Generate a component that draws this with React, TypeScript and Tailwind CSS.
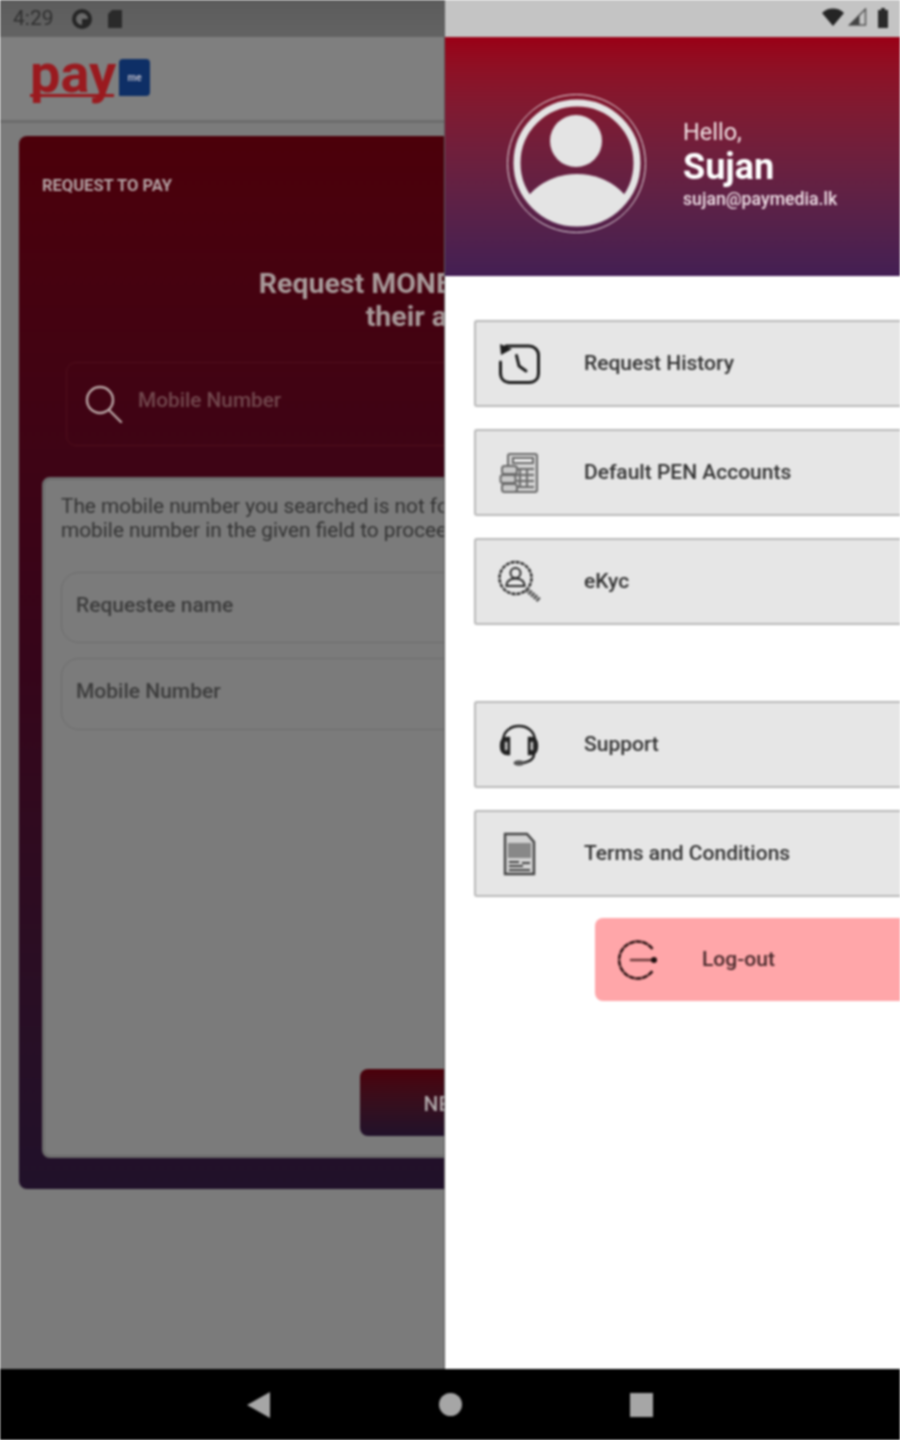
import React from "react";

const font = { fontFamily: "Roboto, 'Noto Sans', sans-serif" };

function HistoryIcon() {
  return (
    <svg width="44" height="44" viewBox="0 0 44 44" fill="none" stroke="#1c1c1c" strokeWidth="3" strokeLinecap="round" strokeLinejoin="round">
      <path d="M9 4H32c5 0 9.5 4 9.5 9V31c0 6-4 9.5-9.5 9.5H13c-6 0-9.5-4-9.5-9.5V20" />
      <path d="M3 2l1 11 11-6z" fill="#1c1c1c" stroke="none" />
      <path d="M19.5 13.5L22 24l7 5" />
    </svg>
  );
}

function AccountsIcon() {
  return (
    <svg width="44" height="44" viewBox="0 0 44 44" fill="none" stroke="#6a6a6a" strokeWidth="2">
      <rect x="11" y="3" width="29" height="38" rx="2" fill="#d2d2d2" />
      <rect x="16" y="7" width="20" height="5" fill="#f0f0f0" />
      <path d="M16 18h21M16 24h21M16 30h21M16 36h21M23 18v18M30 18v18" />
      <rect x="5" y="15" width="15" height="8" rx="2.5" fill="#c8c8c8" />
      <rect x="3.5" y="24" width="15" height="8" rx="2.5" fill="#c8c8c8" />
      <rect x="5" y="33" width="15" height="8" rx="2.5" fill="#c8c8c8" />
    </svg>
  );
}

function KycIcon() {
  return (
    <svg width="44" height="44" viewBox="0 0 44 44" fill="none" stroke="#2c2c2c" strokeWidth="2.4" strokeLinecap="round">
      <circle cx="18.5" cy="18" r="16" strokeDasharray="4 1" strokeLinecap="butt" />
      <circle cx="18.5" cy="13" r="5" strokeWidth="2" />
      <path d="M9.5 26c0-5 4-7.5 9-7.5s9 2.5 9 7.5z" strokeWidth="2" />
      <path d="M29.5 29.5l13 11" stroke="#555" strokeWidth="5" strokeDasharray="2.5 1" strokeLinecap="butt" />
    </svg>
  );
}

function SupportIcon() {
  return (
    <svg width="44" height="44" viewBox="0 0 44 44" fill="none" stroke="#1f1f1f" strokeWidth="2.4" strokeLinecap="round">
      <path d="M6 21V18C6 9 13 3 22 3s16 6 16 15v3" />
      <path d="M10 15h2v16h-2c-4 0-6-3-6-8s2-8 6-8z" fill="#2e2e2e" />
      <rect x="8" y="19" width="2.5" height="8" fill="#c8c8c8" stroke="none" />
      <path d="M34 15h-2v16h2c4 0 6-3 6-8s-2-8-6-8z" fill="#2e2e2e" />
      <rect x="33.5" y="19" width="2.5" height="8" fill="#c8c8c8" stroke="none" />
      <path d="M37 31c0 5-5 8-12 9" />
      <ellipse cx="22" cy="40" rx="5.5" ry="2.8" fill="#555" stroke="none" />
    </svg>
  );
}

function TermsIcon() {
  return (
    <svg width="44" height="44" viewBox="0 0 44 44" fill="none">
      <path d="M8 2h22l7 8v32H8z" fill="#d2d2d2" stroke="#444" strokeWidth="2.4" />
      <rect x="11" y="11" width="23" height="15" fill="#888" />
      <path d="M12 30h10M25 31h8M12 34h14M12 38h21" stroke="#444" strokeWidth="2.2" />
    </svg>
  );
}

function LogoutIcon() {
  return (
    <svg width="44" height="44" viewBox="0 0 44 44" fill="none" stroke="#2d1414" strokeLinecap="round">
      <path d="M35.5 11A18.5 18.5 0 1 0 35.5 33" strokeWidth="2.6" strokeDasharray="6 0.6" strokeLinecap="butt" />
      <path d="M14 22h22" strokeWidth="2.6" stroke="#6e3c3c" />
      <circle cx="37" cy="22" r="3" fill="#1f0f0f" stroke="none" />
    </svg>
  );
}

function MenuRow({ icon, label }: { icon: React.ReactNode; label: string }) {
  return (
    <div className="flex h-[87px] w-[460px] items-center rounded-l-[3px] border-y-[2.5px] border-l-[2.5px] border-[#b9b9b9] bg-[#e6e6e6]">
      <div className="ml-[21px] flex w-[44px] justify-center">{icon}</div>
      <span className="ml-[43px] text-[21px] font-medium text-[#333333]">{label}</span>
    </div>
  );
}

export default function App() {
  return (
    <div className="flex h-[1440px] w-[900px] flex-col overflow-hidden bg-black blur-[0.8px]" style={font}>
      <div className="flex h-[1369px] w-full">
        {/* dimmed screen behind the drawer */}
        <div className="flex w-[445px] shrink-0 flex-col overflow-hidden border-r border-[#5c5c5c] bg-[#7b7b7b]">
          <div className="flex h-[37px] shrink-0 items-center bg-gradient-to-b from-[#5c5c5c] to-[#636363] pl-[13px] text-[#2f2f2f]">
            <span className="text-[21px]">4:29</span>
            <svg className="ml-[17px]" width="22" height="22" viewBox="0 0 22 22">
              <circle cx="11" cy="11" r="10" fill="#252525" />
              <path d="M11 5a6 6 0 1 0 0 12V11h6a6 6 0 0 0-6-6z" fill="#6a6a6a" />
            </svg>
            <svg className="ml-[14px]" width="16" height="20" viewBox="0 0 16 20">
              <path d="M5 1h10v18H1V5z" fill="#2a2a2a" />
            </svg>
          </div>
          <div className="flex h-[86px] w-full shrink-0 items-start border-b-[3px] border-[#6c6c6c] bg-[#7f7f7f] pl-[30px] pt-[18px]">
            <div className="relative h-[44px] w-[88px]">
              <span className="block text-[54px] leading-[38px] font-bold text-[#9a1a1f]">pay</span>
              <div className="absolute bottom-[2px] left-0 h-[3px] w-[84px] bg-[#9a1a1f]" />
            </div>
            <div className="ml-[1px] mt-[4px] flex h-[37px] w-[31px] items-center justify-center rounded-[4px] rounded-bl-none bg-[#0e2f66] text-[10px] font-bold text-[#b7b7c5]">me</div>
          </div>
          <div className="pl-[19px] pt-[13px]">
            <div className="flex h-[1053px] w-[862px] flex-col rounded-[8px] bg-gradient-to-b from-[#4c000a] via-[#36051a] to-[#21112a] px-[23px] pb-[31px]">
              <div className="mt-[41px] text-[16.5px] leading-[18px] font-bold text-[#b5a3a5]">REQUEST TO PAY</div>
              <div className="mt-[72px] text-center text-[28.5px] leading-[33px] font-bold text-[#a89a9a]">
                <div className="pr-[10px]">Request MONEY from people</div>
                <div>their account</div>
              </div>
              <div className="ml-[24px] mt-[29px] flex h-[84px] w-[770px] shrink-0 items-center rounded-[10px] border border-[#50101c]">
                <svg className="ml-[18px]" width="38" height="38" viewBox="0 0 38 38" fill="none" stroke="#b9a5a5" strokeWidth="2.4" strokeLinecap="round">
                  <circle cx="15" cy="15" r="13" />
                  <path d="M24 25l12 12" />
                </svg>
                <span className="mb-[6px] ml-[15px] text-[20.8px] font-medium text-[#72484e]">Mobile Number</span>
              </div>
              <div className="mt-[31px] flex min-h-0 flex-1 flex-col rounded-[8px] border-[3px] border-[#6d6d6d] bg-[#7b7b7b] px-[16px] pb-[19px]">
                <div className="mt-[14px] text-[20.8px] leading-[24px] text-[#333]">
                  <div>The mobile number you searched is not found. Please enter the</div>
                  <div>mobile number in the given field to proceed with the request</div>
                </div>
                <div className="mt-[30px] flex h-[71px] w-[770px] shrink-0 items-center rounded-[18px] border border-[#6c6c6c] pb-[4px] pl-[14px] text-[21px] font-medium text-[#3c3c3c]">Requestee name</div>
                <div className="mt-[15px] flex h-[72px] w-[770px] shrink-0 items-center rounded-[18px] border border-[#6c6c6c] pb-[4px] pl-[14px] text-[21px] font-medium text-[#3c3c3c]">Mobile Number</div>
                <div className="ml-[299px] mt-auto flex h-[67px] w-[180px] shrink-0 items-center justify-center rounded-[8px] bg-gradient-to-b from-[#4c000a] to-[#21112a] pt-[4px] text-[21px] font-medium text-[#b0a8aa]">NEXT</div>
              </div>
            </div>
          </div>
        </div>

        {/* drawer */}
        <div className="flex min-w-0 flex-1 flex-col overflow-hidden bg-white">
          <div className="flex h-[37px] shrink-0 items-start justify-end gap-[4px] bg-[#c4c4c4] pr-[11px] pt-[8px]">
            <svg width="22" height="18" viewBox="0 0 22 18"><path d="M0 5a16 16 0 0 1 22 0L11 18z" fill="#252525" /></svg>
            <svg width="19" height="18" viewBox="0 0 18 18"><path d="M17 1v16H1z" fill="none" stroke="#555" strokeWidth="1.5" /><path d="M11 7v10H1z" fill="#444" /></svg>
            <svg className="ml-[6px]" width="12" height="20" viewBox="0 0 12 20"><path d="M4 0h4v2h3v18H1V2h3z" fill="#2a2a2a" /></svg>
          </div>
          <div className="flex h-[239px] shrink-0 items-center border-b border-[#3a0f50] bg-gradient-to-b from-[#9a0016] to-[#441f53] pl-[62px] pt-[14px]">
            <div className="flex h-[139px] w-[139px] shrink-0 items-center justify-center rounded-full border-[1.5px] border-[#e8dfe2]">
              <svg width="130" height="130" viewBox="0 0 130 130">
                <defs>
                  <clipPath id="avatar-clip"><circle cx="65" cy="65" r="60" /></clipPath>
                </defs>
                <g clipPath="url(#avatar-clip)">
                  <circle cx="64" cy="43" r="26" fill="#e4e4e4" />
                  <ellipse cx="65" cy="129" rx="60" ry="53" fill="#e4e4e4" />
                </g>
                <circle cx="65" cy="65" r="60" fill="none" stroke="#e4e4e4" strokeWidth="7" />
              </svg>
            </div>
            <div className="ml-[37px] mt-[2px] flex flex-col">
              <span className="text-[23.5px] leading-[28px] text-[#f3e4e6]">Hello,</span>
              <span className="mt-[1px] text-[36px] leading-[40px] font-bold text-white">Sujan</span>
              <span className="mt-[1px] text-[17.7px] leading-[22px] font-medium text-[#efdfe6]">sujan@paymedia.lk</span>
            </div>
          </div>
          <div className="flex flex-col pl-[29px] pt-[44px]">
            <MenuRow icon={<HistoryIcon />} label="Request History" />
            <div className="mt-[22px]"><MenuRow icon={<AccountsIcon />} label="Default PEN Accounts" /></div>
            <div className="mt-[22px]"><MenuRow icon={<KycIcon />} label="eKyc" /></div>
            <div className="mt-[76px]"><MenuRow icon={<SupportIcon />} label="Support" /></div>
            <div className="mt-[22px]"><MenuRow icon={<TermsIcon />} label="Terms and Conditions" /></div>
            <div className="ml-[121px] mt-[21px] flex h-[83px] w-[340px] items-center rounded-l-[8px] bg-[#ffa6a9]">
              <div className="ml-[22px]"><LogoutIcon /></div>
              <span className="ml-[41px] text-[21px] font-medium text-[#4a2a2c]">Log-out</span>
            </div>
          </div>
        </div>
      </div>
      <div className="flex h-[71px] w-full shrink-0 items-center bg-black pl-[247px]">
        <svg width="24" height="26" viewBox="0 0 24 26"><path d="M23 0v26L0 13z" fill="#a6a6a6" /></svg>
        <div className="ml-[168px] h-[23px] w-[23px] rounded-full bg-[#a6a6a6]" />
        <div className="ml-[168px] h-[24px] w-[23px] bg-[#a6a6a6]" />
      </div>
    </div>
  );
}
